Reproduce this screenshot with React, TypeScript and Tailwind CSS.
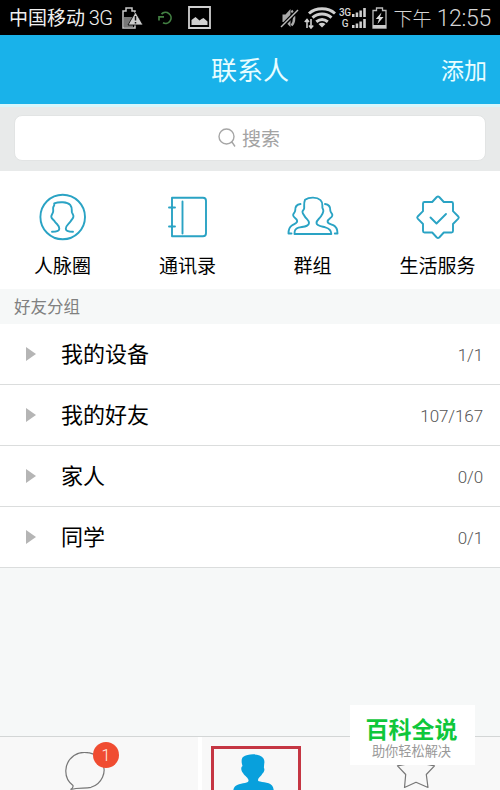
import React from 'react';

const groups = [
  { name: "我的设备", count: "1/1" },
  { name: "我的好友", count: "107/167" },
  { name: "家人", count: "0/0" },
  { name: "同学", count: "0/1" },
];

const shortcuts = [
  { label: "人脉圈", icon: <CircleIcon /> },
  { label: "通讯录", icon: <BookIcon /> },
  { label: "群组", icon: <GroupIcon /> },
  { label: "生活服务", icon: <ServiceIcon /> },
];

function CircleIcon() {
  return (
    <svg className="w-[52px] h-[52px]" viewBox="0 0 52 52" fill="none" stroke="#2aa3c4" strokeWidth="1.9" strokeLinecap="round" strokeLinejoin="round">
      <circle cx="25.700" cy="26" r="22.300" />
      <path d="M15 40.800c4 0 7.300-.6 7.300-3 0-3.500-2-4-4.300-7-1.200-2-3.500-3-3.700-5-.2-1.800 1-2.500 1.700-4.500.7-2-.3-3.200.3-5.200.4-1.300 1.500-1.200.9-3.800 5-1.700 13-1.600 16 1.500 2.300 2.800 1.300 5.500 1.700 7.500.5 1.700 2 2.500 1.500 4.500-.4 2-1.700 2.500-2.700 4.500-2 3-4.900 4-4.900 7.500 0 2.400 3.500 3 7.200 3" />
    </svg>
  );
}

function BookIcon() {
  return (
    <svg className="w-[52px] h-[52px]" viewBox="0 0 52 52" fill="none" stroke="#2aa3c4" strokeWidth="1.9" strokeLinecap="round" strokeLinejoin="round">
      <path d="M10 6.700h31q3 0 3 3v32.600q0 3-3 3H10zM20.500 10.500v32M7 16.500h6M7 35.500h6" />
    </svg>
  );
}

function GroupIcon() {
  return (
    <svg className="w-[52px] h-[52px]" viewBox="0 0 52 52" fill="none" stroke="#2aa3c4" strokeWidth="1.9" strokeLinecap="round" strokeLinejoin="round">
      <path d="M7.500 43c-.2-3.500 1-5.500 4-6.300 5-1.200 10.500-1.200 10.500-4.700 0-3-3-4-4.500-7-1-2-2.300-2.500-2-4.500.3-1.600 1.500-1.400 1.700-3.500.1-2.500-.6-5 .8-8.200 4.500-3 12-2.800 15.500.3 2.700 2.500 1.700 5 1.900 7.500.2 1.500 1.200 1.800.9 3.700-.3 2.200-1.300 3.500-2.500 5.200-1.500 2.400-4.300 3.500-4.300 6.500s4.800 3.300 8.800 4.300c3.500.9 6 2.700 6 6.700z" />
      <path d="M13.500 13c-4.500.5-5.500 3-5.300 6.500-.2 2.800-2.500 2.500-2 5 .3 2.500 3.800 2.500 4 5.500 0 2.500-3 3-5 4.200-2.500 1.500-3.700 4-3.700 8.300h3" />
      <path d="M38 13c4.500.5 5.500 3 5.300 6.500.2 2.800 2.500 2.500 2 5-.3 2.500-4.500 3-4.700 6 0 2.500 3.500 2.500 5.700 3.700 3 1.500 4.200 4 4.200 8.300h-2.700" />
    </svg>
  );
}

function ServiceIcon() {
  return (
    <svg className="w-[52px] h-[52px]" viewBox="0 0 52 52" fill="none" stroke="#2aa3c4" strokeWidth="1.9" strokeLinecap="round" strokeLinejoin="round">
      <path d="M27.200 6L31.800 11h7.700q1.500 0 1.500 1.500v7.700L46.300 25.500q1 1.100 0 2.200L41 33v7q0 1.500-1.500 1.500h-7.700L27.200 46.500q-1.200 1-2.400 0L20.200 41.500h-7.700Q11 41.500 11 40V33L5.700 27.700q-1-1.100 0-2.200L11 20.200v-7.700Q11 11 12.500 11h7.700L24.800 6q1.200-1 2.400 0" />
      <path d="M18.500 26.500l6 6 9.500-9.500" />
    </svg>
  );
}

function StatusBar() {
  return (
    <div className="h-[35px] bg-black flex items-center pl-[9px] pr-[9px] text-[#d5d5d5]">
      <span className="pt-[2px] text-[19px] leading-[35px] text-[#f0f0f0] whitespace-nowrap w-[108px]">
        中国移动 <span className="-ml-px text-[20px] font-light tracking-[-0.5px]">3G</span>
      </span>
      {/* Battery warning */}
      <svg className="w-[21px] h-[22px] ml-[5px]" viewBox="0 0 21 22">
        <path d="M1 4h3V1h6v3h3v17H1z" fill="none" stroke="#c8c8c8" strokeWidth="1.500" />
        <path d="M2 10h9v10H2z" fill="#777" />
        <path d="M13.500 5L21 18H6z" fill="#ccc" stroke="#000" strokeWidth=".8" />
        <path d="M13.500 9v4.500M13.500 15v1.600" stroke="#111" strokeWidth="1.500" />
      </svg>
      <svg className="w-[15px] h-[14px] ml-[15px]" viewBox="0 0 15 14" fill="none" stroke="#438143" strokeWidth="1.700">
        <path d="M3.500 3.200A5.500 5.500 0 1 1 5 11.800M1 9.500V5.800h5" />
      </svg>
      <svg className="w-[23px] h-[23px] ml-[15px]" viewBox="0 0 23 23">
        <path d="M1 1h21v21H1z" fill="none" stroke="#d0d0d0" strokeWidth="1.800" />
        <path d="M3.500 19v-5l4-3 4 3.500 2-1.500 2-1 4 3.500V19z" fill="#d0d0d0" />
      </svg>
      <div className="flex-1" />
      {/* Muted speaker */}
      <svg className="w-[19px] h-[20px]" viewBox="0 0 19 20">
        <path d="M2.500 6.500h3L10.500 1v18l-5-5h-3z" fill="#aaa" />
        <path d="M11.500 2.500c3.500 3.500 3.500 11.500 0 15" fill="none" stroke="#aaa" strokeWidth="2.400" />
        <path d="M1.500 19L18 2" stroke="#000" strokeWidth="4" />
        <path d="M1 19L18 2" stroke="#bbb" strokeWidth="1.500" />
      </svg>
      <svg className="w-[32px] h-[22px] ml-[5px]" viewBox="0 0 32 22">
        <g fill="none" stroke="#cfcfcf" strokeWidth="3">
          <path d="M5 6.500c7-6.300 19-6.300 26 0" />
          <path d="M8.500 10.700c5.500-4.800 13.500-4.800 19 0" />
          <path d="M12.300 14.700c3.500-2.700 8-2.700 11.500 0" />
        </g>
        <path d="M14.500 17q3.500-2.500 7 0L18 20.500z" fill="#cfcfcf" />
        <path d="M3 21v-8M7 12v8M.8 15L3 12.500 5 15M5 18.500L7 21l2.200-2.500" fill="none" stroke="#cfcfcf" strokeWidth="1.600" />
      </svg>
      <div className="ml-[3px] w-[27px] flex flex-col gap-[2px] text-[10px] leading-[9px] font-medium">
        <div className="flex items-end justify-end gap-px">
          <span className="tracking-[-0.5px]">3G</span>
          <SignalBars />
        </div>
        <div className="flex items-end justify-end gap-[3px]">
          <span>G</span>
          <SignalBars />
        </div>
      </div>
      <svg className="w-[15px] h-[22px] ml-[6px]" viewBox="0 0 15 22">
        <path d="M1 3.500h3.500V1h6v2.500H14V21H1z" fill="none" stroke="#bbb" strokeWidth="1.300" />
        <path d="M1 18h13v3H1z" fill="#ccc" />
        <path d="M9.500 5.500L3.800 12H7l-1.500 5 6-7H8z" fill="#ddd" />
      </svg>
      <span className="ml-[7px] pt-[3px] text-[19px] leading-[35px] font-light whitespace-nowrap">下午</span>
      <span className="ml-[5px] pt-px text-[23px] leading-[35px] font-light tracking-[-0.3px] whitespace-nowrap">12:55</span>
    </div>
  );
}

function SignalBars() {
  return (
    <svg className="w-[14px] h-[9px]" viewBox="0 0 14 9" fill="#cfcfcf">
      <path d="M0 6h2.500v3H0zM3.700 4.500h2.500V9H3.700zM7.400 2.500h2.500V9H7.400zM11.200 0h2.600v9h-2.600z" />
    </svg>
  );
}

export default function App() {
  return (
    <div className="relative w-[500px] h-[790px] overflow-hidden flex flex-col bg-[#f6f8f8] font-[Roboto,'Noto_Sans_CJK_SC',sans-serif]">
      <StatusBar />

      {/* Header */}
      <header className="h-[69px] bg-[#19b2ea] grid grid-cols-3 items-center text-[#e8fdff]">
        <span />
        <h1 className="pt-1 text-[26px] leading-[65px] text-center">联系人</h1>
        <span className="pt-[3px] text-[23px] leading-[65px] text-right pr-[13px]">添加</span>
      </header>

      {/* Search */}
      <div className="h-[67px] bg-[#e8eaea] border-t-[3px] border-[#d8f6fb] pt-2 px-[14px]">
        <div className="h-[46px] bg-white rounded-lg border border-[#e2e4e4] flex items-center justify-center gap-[6px] pr-[2px] text-[#a3a3a3]">
          <svg className="w-[18px] h-[20px]" viewBox="0 0 18 20" fill="none" stroke="#a6a6a6" strokeWidth="1.400">
            <circle cx="8.500" cy="8.500" r="7.500" />
            <path d="M12.500 15l1.500-1 3 4.500" />
          </svg>
          <span className="pt-[3px] text-[19px] leading-[41px]">搜索</span>
        </div>
      </div>

      {/* Shortcuts */}
      <div className="h-[118px] bg-white grid grid-cols-4 pt-5">
        {shortcuts.map((item) => (
          <div key={item.label} className="flex flex-col items-center">
            {item.icon}
            <span className="mt-[10px] text-[19px] leading-7 text-black">{item.label}</span>
          </div>
        ))}
      </div>

      <div className="h-[35px] pl-[14px] pt-px text-[16.500px] leading-[35px] text-[#808080]">好友分组</div>

      {/* Friend groups */}
      <ul className="bg-white">
        {groups.map((group) => (
          <li key={group.name} className="h-[61px] border-b border-[#dbdddd] flex items-center pl-[26px] pr-[17px]">
            <svg className="w-[10px] h-[14px]" viewBox="0 0 10 14">
              <path d="M0 0l10 7-10 7z" fill="#b5b5b5" />
            </svg>
            <span className="ml-[25px] flex-1 pt-[2px] text-[22px] leading-[58px] text-black">{group.name}</span>
            <span className="pt-[3px] text-[17px] font-light tracking-[-0.1px] text-[#555]">{group.count}</span>
          </li>
        ))}
      </ul>

      <div className="flex-1" />

      {/* Bottom tabs */}
      <nav className="h-[54px] shrink-0 border-t border-[#d3d6d6] bg-[#f8f8f8] flex overflow-hidden">
        <div className="w-[198px] flex pl-[65px] pt-[15px]">
          <div className="relative">
            <svg className="w-[40px] h-[40px]" viewBox="0 0 40 40" fill="none" stroke="#777" strokeWidth="1.200">
              <path d="M5.500 37.500q3-1.500 2.500-4C-2 26-1.500 11 9 3.500c9-6 23-3 28 6.500 5.500 10-.5 22-11 25.300C20 37 14 35 5.500 37.500z" />
            </svg>
            <span className="absolute left-[28px] -top-[10px] w-[26px] h-[26px] rounded-full bg-[#f04c31] text-[#fff0e8] text-[16px] font-light leading-[27px] text-center">1</span>
          </div>
        </div>
        <div className="w-[4px] bg-white" />
        <div className="w-[130px] pl-[9px] pt-[9px]">
          <div className="w-[90px] h-[60px] border-[3px] border-[#c53643] flex justify-center pt-[5px]">
            <svg className="w-[42px] h-[42px] mr-[6px]" viewBox="0 0 42 42" fill="#08a0dc">
              <path d="M11 3c5-3.500 17-4 20.500 1.500 2 3.500 0 7 .5 9.500 1 1.500 0 4.500-1.500 5.500-1.500 3-4.500 4-4.500 7 1 2 11 1 14 5 2 2.500 2 7 2 10.500H1c0-4 0-8 2.500-10 4-3.500 12-2 13-5 .5-3-3.500-4.500-5.500-8C8.500 16 9 13 10.500 12 9.500 9 9 5 11 3z" />
            </svg>
          </div>
        </div>
        <div className="flex-1 flex pl-[64px] pt-[13px]">
          <svg className="w-[40px] h-[40px]" viewBox="0 0 40 40" fill="none" stroke="#777" strokeWidth="1.200" strokeLinejoin="round">
            <path d="M20 1l6 12.500 12.500 2.300L30.300 24.500 32 37.500 20 32.300 8.500 37.500 9.700 24.500 1.500 15.800 14 13.500z" />
          </svg>
        </div>
      </nav>

      {/* Overlay label */}
      <div className="absolute left-[350px] top-[705px] w-[125px] h-[60px] bg-white flex flex-col items-center pt-[10px] pr-[2px]">
        <span className="pt-px text-[23px] leading-[29px] font-bold text-[#0fc73b]">百科全说</span>
        <span className="text-[13.200px] leading-[14px] text-[#999]">助你轻松解决</span>
      </div>
    </div>
  );
}
